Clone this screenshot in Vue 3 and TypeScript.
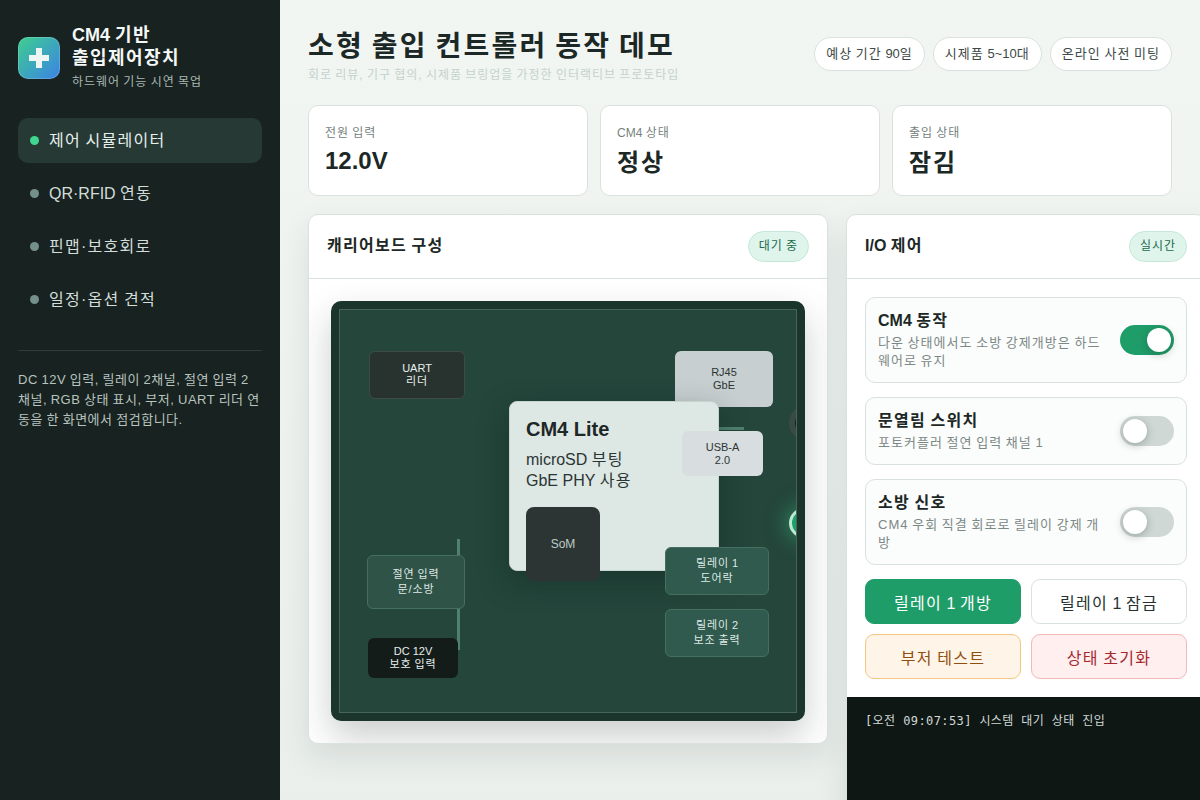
<template>
  <div class="app">
    <aside class="sidebar">
      <div class="brand">
        <div class="brand-icon">
          <svg width="42" height="42" viewBox="0 0 42 42"><path d="M18 11h6v7h7v6h-7v7h-6v-7h-7v-6h7z" fill="#eef6f4" /></svg>
        </div>
        <div>
          <div class="brand-title"><span class="lat">CM4</span> 기반<br />출입제어장치</div>
          <div class="brand-sub">하드웨어 기능 시연 목업</div>
        </div>
      </div>
      <nav class="nav">
        <div v-for="(item, i) in navItems" :key="item.text" class="nav-item" :class="{ active: i === 0 }">
          <span class="nav-dot"></span>
          <span><span class="lat">{{ item.lead }}</span> {{ item.text }}</span>
        </div>
      </nav>
      <p class="side-note">DC 12V 입력, 릴레이 2채널, 절연 입력 2<br />채널, RGB 상태 표시, 부저, UART 리더 연<br />동을 한 화면에서 점검합니다.</p>
    </aside>

    <main class="main">
      <header class="top">
        <div>
          <h1>소형 출입 컨트롤러 동작 데모</h1>
          <p class="top-sub">회로 리뷰, 기구 협의, 시제품 브링업을 가정한 인터랙티브 프로토타입</p>
        </div>
        <div class="pills">
          <span class="pill">예상 기간 <span class="lat">90</span>일</span>
          <span class="pill">시제품 <span class="lat">5~10</span>대</span>
          <span class="pill">온라인 사전 미팅</span>
        </div>
      </header>

      <section class="stats">
        <div v-for="stat in stats" :key="stat.text" class="stat">
          <div class="stat-label"><span class="lat">{{ stat.lead }}</span> {{ stat.text }}</div>
          <div class="stat-value" :class="{ lat: stat.latin }">{{ stat.value }}</div>
        </div>
      </section>

      <section class="panels">
        <div class="panel board-panel">
          <div class="panel-head">
            <h2>캐리어보드 구성</h2>
            <span class="badge">대기 중</span>
          </div>
          <div class="board-wrap">
            <div class="board">
              <div class="board-inner">
                <div class="trace trace-h"></div>
                <div class="trace trace-v"></div>
                <div class="part uart"><span><span class="lat">UART</span><br />리더</span></div>
                <div class="part rj45 lat">RJ45<br />GbE</div>
                <div class="cm4">
                  <div class="cm4-title lat">CM4 Lite</div>
                  <div class="cm4-sub"><span class="lat">microSD</span> 부팅<br /><span class="lat">GbE PHY</span> 사용</div>
                  <div class="som lat">SoM</div>
                </div>
                <div class="part usb lat">USB-A<br />2.0</div>
                <div class="part green iso"><span>절연 입력<br />문/소방</span></div>
                <div class="part dc"><span><span class="lat">DC 12V</span><br />보호 입력</span></div>
                <div class="part green relay1"><span>릴레이 <span class="lat">1</span><br />도어락</span></div>
                <div class="part green relay2"><span>릴레이 <span class="lat">2</span><br />보조 출력</span></div>
                <div class="led led-buzzer"></div>
                <div class="led led-rgb"></div>
              </div>
            </div>
          </div>
        </div>

        <div class="panel io-panel">
          <div class="panel-head">
            <h2><span class="lat">I/O</span> 제어</h2>
            <span class="badge">실시간</span>
          </div>
          <div class="io-body">
            <div v-for="row in rows" :key="row.title" class="io-row">
              <div class="io-text">
                <div class="io-title"><span class="lat">{{ row.lead }}</span> {{ row.title }}</div>
                <div class="io-desc">{{ row.desc }}</div>
              </div>
              <button class="toggle" :class="{ on: row.on }" @click="row.on = !row.on"><span class="knob"></span></button>
            </div>
            <div class="actions">
              <button class="btn primary">릴레이 <span class="lat">1</span> 개방</button>
              <button class="btn">릴레이 <span class="lat">1</span> 잠금</button>
              <button class="btn amber">부저 테스트</button>
              <button class="btn red">상태 초기화</button>
            </div>
          </div>
          <div class="log">[오전 09:07:53] 시스템 대기 상태 진입</div>
        </div>
      </section>
    </main>
  </div>
</template>

<script setup lang="ts">
import { reactive } from 'vue';

const navItems = [
  { lead: '', text: '제어 시뮬레이터' },
  { lead: 'QR·RFID', text: '연동' },
  { lead: '', text: '핀맵·보호회로' },
  { lead: '', text: '일정·옵션 견적' },
];
const stats = [
  { lead: '', text: '전원 입력', value: '12.0V', latin: true },
  { lead: 'CM4', text: '상태', value: '정상', latin: false },
  { lead: '', text: '출입 상태', value: '잠김', latin: false },
];

const rows = reactive([
  { lead: 'CM4', title: '동작', desc: '다운 상태에서도 소방 강제개방은 하드웨어로 유지', on: true },
  { lead: '', title: '문열림 스위치', desc: '포토커플러 절연 입력 채널 1', on: false },
  { lead: '', title: '소방 신호', desc: 'CM4 우회 직결 회로로 릴레이 강제 개방', on: false },
]);
</script>

<style>
html, body {
  margin: 0;
  overflow: hidden;
}
</style>

<style scoped>
/* 한글 자폭을 1em에 맞춘다 */
* {
  box-sizing: border-box;
  letter-spacing: 0.08em;
  word-spacing: -0.08em;
}

.app {
  display: grid;
  grid-template-columns: 280px 1fr;
  width: 1200px;
  height: 800px;
  overflow: hidden;
  font-family: "Liberation Sans", "Noto Sans CJK KR", sans-serif;
  color: #1a2422;
}

.lat {
  letter-spacing: 0;
  word-spacing: 0;
}

.sidebar {
  background: #182220;
  padding: 24px 18px;
  color: #eef4f2;
}

.brand {
  display: flex;
  align-items: center;
  gap: 12px;
}

.brand-icon {
  width: 42px;
  height: 42px;
  border-radius: 10px;
  background: linear-gradient(135deg, #3ecf8e, #3b82e6);
  box-shadow: inset 0 0 0 1px rgba(255, 255, 255, 0.18);
  flex: none;
}

.brand-icon svg {
  display: block;
}

.brand-title {
  font-size: 18px;
  font-weight: 700;
  line-height: 23px;
  color: #f4f8f7;
}

.brand-sub {
  margin-top: 4px;
  font-size: 12px;
  line-height: 17px;
  color: #a9b8b3;
}

.nav {
  display: flex;
  flex-direction: column;
  gap: 8px;
  margin-top: 27px;
}

.nav-item {
  display: flex;
  align-items: center;
  gap: 10px;
  height: 45px;
  padding: 0 12px;
  border-radius: 10px;
  font-size: 16px;
  line-height: 20px;
  color: #d3dedb;
}

.nav-item.active {
  background: #273935;
  color: #e6efec;
}

.nav-dot {
  width: 9px;
  height: 9px;
  border-radius: 50%;
  background: #73918a;
}

.active .nav-dot {
  background: #3fd68f;
}

.side-note {
  margin: 28px 0 0;
  padding-top: 19px;
  border-top: 1px solid #303b38;
  font-size: 13px;
  line-height: 20px;
  letter-spacing: 0.04em;
  word-spacing: -0.04em;
  white-space: nowrap;
  color: #b7c3bf;
}

.main {
  min-width: 0;
  padding: 24px 28px 0;
  overflow: hidden;
  background: linear-gradient(180deg, #f1f6f3, #eaefec);
}

.top {
  display: flex;
  align-items: center;
  justify-content: space-between;
  height: 59px;
}

h1 {
  margin: 3px 0 0;
  font-size: 28px;
  line-height: 40px;
  font-weight: 700;
  color: #1c2826;
}

.top-sub {
  margin: -1px 0 0;
  font-size: 12px;
  line-height: 18px;
  color: #c5d2cd;
}

.pills {
  display: flex;
  gap: 8px;
}

.pill {
  display: block;
  height: 34px;
  padding: 0 11px;
  border: 1px solid #d9e2df;
  border-radius: 17px;
  background: #fff;
  font-size: 13px;
  line-height: 32px;
  color: #3d4a47;
}

.stats {
  display: grid;
  grid-template-columns: repeat(3, 1fr);
  gap: 12px;
  margin-top: 22px;
}

.stat {
  height: 91px;
  padding: 19px 16px;
  border: 1px solid #d9e2df;
  border-radius: 10px;
  background: #fff;
}

.stat-label {
  font-size: 12px;
  line-height: 17px;
  color: #75827e;
}

.stat-value {
  margin-top: 5px;
  font-size: 24px;
  line-height: 32px;
  font-weight: 700;
  color: #1c2826;
}

.stat-value.lat {
  margin-top: 3px;
}

.panels {
  display: flex;
  align-items: flex-start;
  gap: 18px;
  margin-top: 18px;
}

.panel {
  flex: none;
  border: 1px solid #d9e2df;
  border-radius: 10px;
  background: #fff;
  box-shadow: 0 12px 30px rgba(20, 40, 32, 0.1);
  overflow: hidden;
}

.board-panel {
  width: 520px;
}

.io-panel {
  width: 360px;
}

.panel-head {
  display: flex;
  align-items: center;
  justify-content: space-between;
  height: 64px;
  padding: 0 18px;
  border-bottom: 1px solid #d9e2df;
}

h2 {
  margin: 0 0 2px;
  font-size: 16px;
  line-height: 22px;
  font-weight: 700;
  color: #1c2826;
}

.badge {
  display: block;
  height: 31px;
  padding: 0 10px;
  border: 1px solid #c3e8d8;
  border-radius: 16px;
  background: #dff4eb;
  font-size: 12px;
  line-height: 29px;
  color: #1d6a4e;
}

.board-wrap {
  padding: 22px;
}

.board {
  height: 420px;
  padding: 8px;
  border-radius: 10px;
  background: #1b352d;
  box-shadow: 0 16px 36px rgba(15, 30, 25, 0.22);
}

.board-inner {
  position: relative;
  height: 100%;
  border: 1px solid #47665b;
  background: #24463b;
  overflow: hidden;
}

.part {
  position: absolute;
  display: flex;
  align-items: center;
  justify-content: center;
  border-radius: 6px;
  font-size: 11px;
  line-height: 13px;
  text-align: center;
}

.uart {
  left: 29px;
  top: 41px;
  width: 96px;
  height: 48px;
  border: 1px solid #3f4b48;
  background: #283330;
  color: #e8efed;
}

.rj45 {
  left: 335px;
  top: 41px;
  width: 98px;
  height: 56px;
  background: #c8cfd0;
  color: #2c3533;
}

.usb {
  left: 342px;
  top: 121px;
  width: 81px;
  height: 45px;
  background: #d8dde0;
  color: #2c3533;
}

.green {
  border: 1px solid #45705f;
  background: #2f5a4d;
  color: #dfe9e5;
  line-height: 15px;
}

.iso {
  left: 27px;
  top: 245px;
  width: 98px;
  height: 54px;
  background: #305347;
}

.dc {
  left: 28px;
  top: 328px;
  width: 90px;
  height: 40px;
  background: #141c1a;
  color: #e6eeeb;
}

.relay1 {
  left: 325px;
  top: 237px;
  width: 104px;
  height: 48px;
}

.relay2 {
  left: 325px;
  top: 299px;
  width: 104px;
  height: 48px;
}

.cm4 {
  position: absolute;
  left: 169px;
  top: 91px;
  width: 210px;
  height: 170px;
  padding: 15px 16px;
  border: 1px solid #c6d3cf;
  border-radius: 8px;
  background: #dde7e4;
  box-shadow: 0 10px 30px rgba(10, 25, 20, 0.35);
  color: #1e2826;
}

.cm4-title {
  font-size: 20px;
  line-height: 24px;
  font-weight: 700;
}

.cm4-sub {
  margin-top: 8px;
  font-size: 16px;
  line-height: 21px;
  color: #2b3533;
}

.som {
  position: absolute;
  left: 16px;
  top: 105px;
  display: flex;
  align-items: center;
  justify-content: center;
  width: 74px;
  height: 74px;
  border-radius: 8px;
  background: #2c3533;
  font-size: 12px;
  color: #bccbc7;
}

.trace {
  position: absolute;
  background: #4f8070;
}

.trace-h {
  left: 379px;
  top: 117px;
  width: 25px;
  height: 3px;
}

.trace-v {
  left: 117px;
  top: 229px;
  width: 3px;
  height: 111px;
}

.led {
  position: absolute;
  border-radius: 50%;
}

.led-buzzer {
  left: 455px;
  top: 101px;
  width: 24px;
  height: 24px;
  background: #17201e;
  box-shadow: 0 0 0 6px #3a4a45;
}

.led-rgb {
  left: 449px;
  top: 198px;
  width: 30px;
  height: 30px;
  border: 3px solid #bfe9d6;
  background: #1fa06a;
  box-shadow: 0 0 22px rgba(64, 211, 145, 0.6);
}

.io-body {
  display: flex;
  flex-direction: column;
  gap: 14px;
  padding: 18px;
}

.io-row {
  display: flex;
  align-items: center;
  gap: 12px;
  padding: 12px;
  border: 1px solid #d9e2df;
  border-radius: 10px;
  background: #fbfcfc;
}

.io-text {
  flex: 1;
  min-width: 0;
}

.io-title {
  font-size: 16px;
  line-height: 22px;
  font-weight: 700;
  color: #1c2826;
}

.io-desc {
  margin-top: 2px;
  font-size: 13px;
  line-height: 18px;
  color: #7b8885;
}

.toggle {
  position: relative;
  flex: none;
  width: 54px;
  height: 30px;
  padding: 0;
  border: none;
  border-radius: 15px;
  background: #cfd8d5;
  cursor: pointer;
}

.toggle.on {
  background: #1f9d69;
}

.knob {
  position: absolute;
  left: 3px;
  top: 3px;
  width: 24px;
  height: 24px;
  border-radius: 50%;
  background: #fff;
  box-shadow: 0 2px 8px rgba(20, 40, 32, 0.3);
}

.on .knob {
  left: 27px;
}

.actions {
  display: grid;
  grid-template-columns: 1fr 1fr;
  gap: 10px;
}

.btn {
  height: 45px;
  border: 1px solid #d9e2df;
  border-radius: 9px;
  background: #fff;
  font-family: inherit;
  font-size: 16px;
  color: #253230;
  cursor: pointer;
}

.btn.primary {
  border-color: #1f9d69;
  background: #1f9d69;
  color: #fff;
}

.btn.amber {
  border-color: #f3c684;
  background: #fff4e8;
  color: #8f4f0f;
}

.btn.red {
  border-color: #f3b8b8;
  background: #ffefef;
  color: #a5282f;
}

.log {
  height: 150px;
  padding: 15px 18px;
  background: #0f1715;
  font-family: "DejaVu Sans Mono", "Noto Sans CJK KR", monospace;
  font-size: 12px;
  line-height: 18px;
  letter-spacing: 0.4px;
  word-spacing: 0;
  color: #cfd9d6;
}
</style>
